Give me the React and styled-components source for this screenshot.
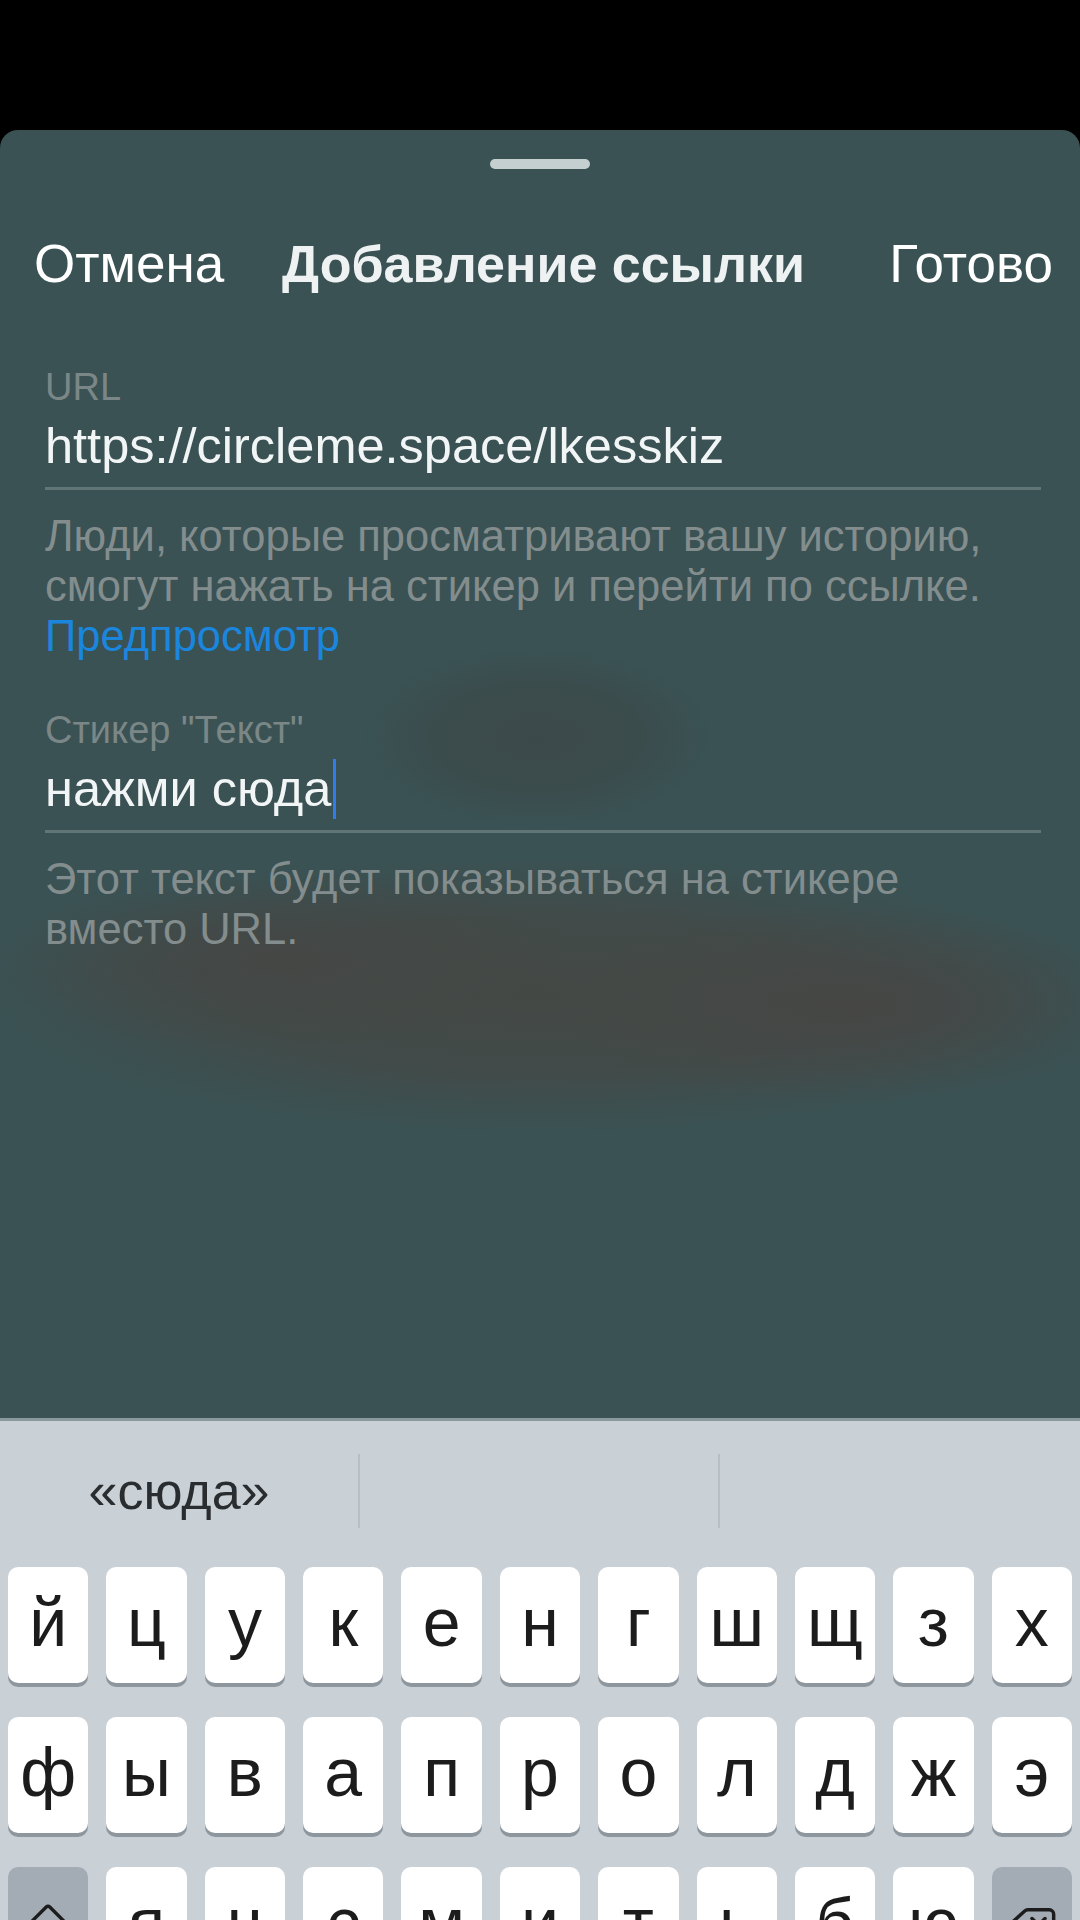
import React from "react";
import styled, { createGlobalStyle } from "styled-components";
import { ArrowBigUp, Delete } from "lucide-react";

const GlobalStyle = createGlobalStyle`
  html, body { margin: 0; padding: 0; background: #000; }
  body { font-family: "Liberation Sans", Arial, sans-serif; }
  * { box-sizing: border-box; }
`;

const Screen = styled.div`
  width: 1080px;
  height: 1920px;
  overflow: hidden;
  display: flex;
  flex-direction: column;
  background: #000;
`;

const StatusArea = styled.div`
  height: 130px;
  flex: none;
  background: #000;
`;

const Sheet = styled.div`
  flex: 1;
  display: flex;
  flex-direction: column;
  border-radius: 18px 18px 0 0;
  background-color: #3a5254;
  background-image:
    radial-gradient(ellipse 300px 90px at 280px 830px, rgba(69, 70, 68, 0.9) 0%, rgba(69, 70, 68, 0) 100%),
    radial-gradient(ellipse 300px 100px at 850px 875px, rgba(70, 70, 68, 0.95) 0%, rgba(70, 70, 68, 0) 100%),
    radial-gradient(ellipse 560px 140px at 540px 865px, rgba(68, 72, 69, 1) 0%, rgba(67, 73, 70, 0.8) 55%, rgba(58, 82, 84, 0) 100%),
    radial-gradient(ellipse 175px 90px at 537px 607px, rgba(60, 72, 72, 0.9) 0%, rgba(60, 72, 72, 0.6) 60%, rgba(58, 82, 84, 0) 100%);
`;

const Handle = styled.div`
  width: 100px;
  height: 10px;
  border-radius: 5px;
  background: #c6cfcf;
  margin: 29px auto 0;
`;

const Header = styled.div`
  display: grid;
  grid-template-columns: 1fr auto 1fr;
  align-items: center;
  margin-top: 65px;
  padding: 0 27px 0 34px;
  height: 60px;
`;

const HeaderButton = styled.span`
  font-size: 53px;
  line-height: 60px;
  color: #ffffff;
  justify-self: ${(p) => (p.$end ? "end" : "start")};
`;

const Title = styled.span`
  font-size: 52px;
  line-height: 60px;
  font-weight: 700;
  color: #eef2f2;
`;

const Form = styled.div`
  display: flex;
  flex-direction: column;
  padding: 0 39px 0 45px;
  margin-top: 70px;
`;

const Field = styled.div`
  display: flex;
  flex-direction: column;
  & + & {
    margin-top: 46px;
  }
`;

const Label = styled.div`
  font-size: 38px;
  line-height: 46px;
  color: #7b8787;
`;

const Value = styled.div`
  display: flex;
  align-items: center;
  height: 60px;
  margin-top: 6px;
  font-size: 50.5px;
  line-height: 60px;
  color: #f2f5f5;
  white-space: nowrap;
`;

const Caret = styled.span`
  display: inline-block;
  width: 3px;
  height: 60px;
  margin-left: 2px;
  background: #2f7cf0;
`;

const Underline = styled.div`
  height: 3px;
  margin-top: 11px;
  background: #5f7576;
`;

const Help = styled.div`
  margin-top: 21px;
  font-size: 43.5px;
  line-height: 50px;
  color: #838d8d;
  white-space: nowrap;
`;

const Link = styled.div`
  color: #1a86dd;
`;

const Keyboard = styled.div`
  height: 502px;
  flex: none;
  overflow: hidden;
  background: #c9d0d6;
  border-top: 3px solid #8a9a9c;
  display: flex;
  flex-direction: column;
`;

const SuggestionBar = styled.div`
  flex: none;
  display: grid;
  grid-template-columns: repeat(3, 1fr);
  height: 146px;
  padding-top: 33px;
  align-items: start;
`;

const Suggestion = styled.div`
  height: 74px;
  display: flex;
  align-items: center;
  justify-content: center;
  font-size: 52px;
  color: #2a2d30;
  border-right: ${(p) => (p.$last ? "none" : "2px solid #b7bfc5")};
`;

const Rows = styled.div`
  flex: none;
  display: flex;
  flex-direction: column;
  gap: 34px;
  padding: 0 8px;
`;

const Row = styled.div`
  flex: none;
  display: grid;
  grid-template-columns: repeat(11, 1fr);
  column-gap: 18px;
`;

const Key = styled.div`
  height: 116px;
  padding-bottom: ${(p) => (p.$func ? "0" : "6px")};
  border-radius: 10px;
  display: flex;
  align-items: center;
  justify-content: center;
  background: ${(p) => (p.$func ? "#a3acb5" : "#ffffff")};
  box-shadow: 0 4px 0 #8f979e;
  font-size: 68px;
  line-height: 1;
  color: #1c1c1c;
`;

const rows = [
  ["й", "ц", "у", "к", "е", "н", "г", "ш", "щ", "з", "х"],
  ["ф", "ы", "в", "а", "п", "р", "о", "л", "д", "ж", "э"],
];
const row3 = ["я", "ч", "с", "м", "и", "т", "ь", "б", "ю"];

export default function App() {
  return (
    <>
      <GlobalStyle />
      <Screen>
        <StatusArea />
        <Sheet>
          <Handle />
          <Header>
            <HeaderButton>Отмена</HeaderButton>
            <Title>Добавление ссылки</Title>
            <HeaderButton $end>Готово</HeaderButton>
          </Header>
          <Form>
            <Field>
              <Label>URL</Label>
              <Value>https://circleme.space/lkesskiz</Value>
              <Underline />
              <Help>
                Люди, которые просматривают вашу историю,
                <br />
                смогут нажать на стикер и перейти по ссылке.
                <Link>Предпросмотр</Link>
              </Help>
            </Field>
            <Field>
              <Label>Стикер "Текст"</Label>
              <Value>
                нажми сюда
                <Caret />
              </Value>
              <Underline />
              <Help>
                Этот текст будет показываться на стикере
                <br />
                вместо URL.
              </Help>
            </Field>
          </Form>
        </Sheet>
        <Keyboard>
          <SuggestionBar>
            <Suggestion>«сюда»</Suggestion>
            <Suggestion />
            <Suggestion $last />
          </SuggestionBar>
          <Rows>
            {rows.map((r, i) => (
              <Row key={i}>
                {r.map((k) => (
                  <Key key={k}>{k}</Key>
                ))}
              </Row>
            ))}
            <Row>
              <Key $func>
                <ArrowBigUp size={50} strokeWidth={1.6} color="#1c1c1c" />
              </Key>
              {row3.map((k) => (
                <Key key={k}>{k}</Key>
              ))}
              <Key $func>
                <Delete size={52} strokeWidth={1.6} color="#1c1c1c" />
              </Key>
            </Row>
          </Rows>
        </Keyboard>
      </Screen>
    </>
  );
}
